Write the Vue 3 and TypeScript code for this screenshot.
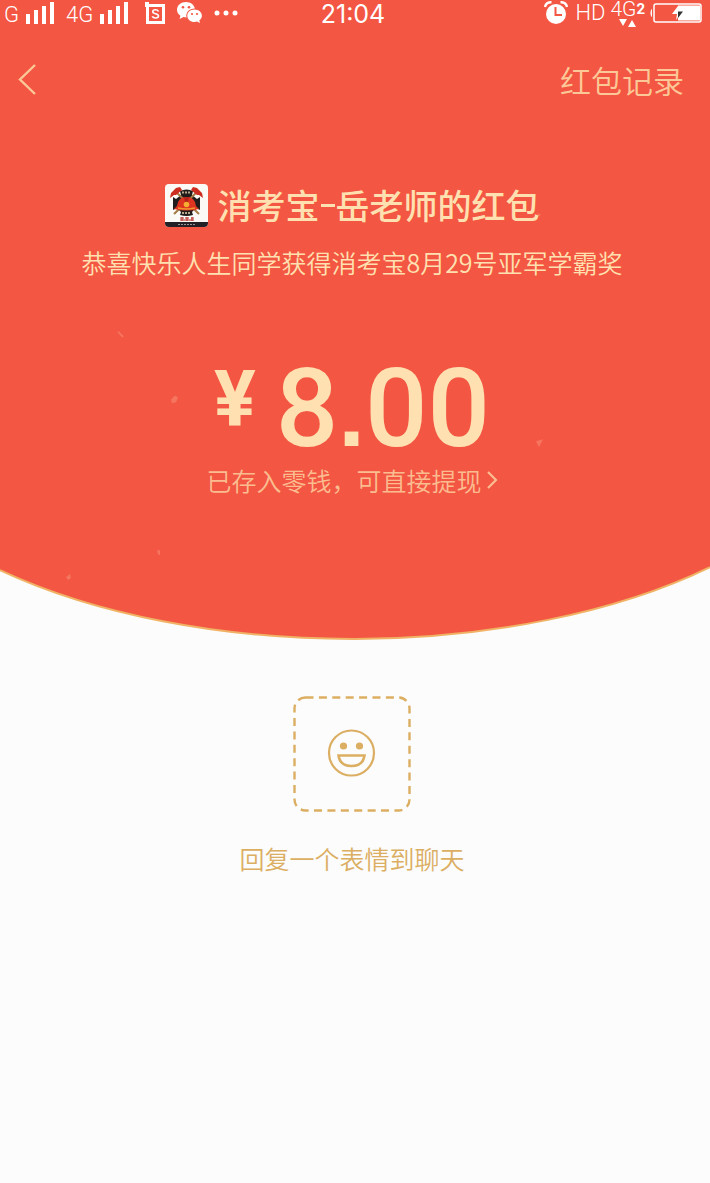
<script setup lang="ts">
import { computed, ref } from 'vue'

interface Bar { x: number; y: number }

const bars: Bar[] = [
  { x: 0, y: 12 },
  { x: 8, y: 8 },
  { x: 16, y: 4 },
  { x: 24, y: 0 },
]

const networks = ref<string[]>(['G', '4G'])
const sender = ref('消考宝')
const owner = ref('岳老师的红包')
const greeting = ref('恭喜快乐人生同学获得消考宝8月29号亚军学霸奖')
const amount = ref(8)
const amountParts = computed(() => amount.value.toFixed(2).split('.'))
</script>

<template>
  <div class="page">
    <section class="hero">
      <svg class="backdrop" viewBox="0 0 710 642" preserveAspectRatio="none" aria-hidden="true">
        <path d="M0 0H710V568A500 236 0 0 1 355 640A500 236 0 0 1 0 571Z" fill="#f35642" />
        <path d="M710 568A500 236 0 0 1 355 640A500 236 0 0 1 0 571" fill="none" stroke="#f0b264" stroke-width="2" />
        <g fill="#f8836c" opacity=".7">
          <path d="M117 332L119 332L124 337L122 338Z" />
          <path d="M171 400L175 396L178 398L176 403L172 404Z" />
          <path d="M536 442L543 440L539 448Z" />
          <path d="M157 551L160 551L160 556L158 555Z" />
          <path d="M66 578L70 575L71 579L68 581Z" />
          <path d="M537 213L541 215L539 217Z" />
        </g>
      </svg>

      <div class="status">
        <div class="side">
          <div v-for="n in networks" :key="n" class="network">
            <span>{{ n }}</span>
            <svg width="28" height="22" viewBox="0 0 28 22" aria-hidden="true">
              <rect v-for="b in bars" :key="b.x" :x="b.x" :y="b.y" width="4" :height="22 - b.y" fill="#fff" />
            </svg>
          </div>
          <svg class="badge" width="20" height="22" viewBox="0 0 20 22" aria-hidden="true">
            <path d="M0 0H4V2H20V22H1V5H0Z M4 5V19H17V5Z" fill="#fff" fill-rule="evenodd" />
            <path d="M13.5 9.5C12.5 7.2 7.8 7.2 7.8 9.7C7.8 12.3 13.5 11.4 13.5 14C13.5 16.6 8 16.5 7.3 14.3" fill="none" stroke="#fff" stroke-width="1.6" />
          </svg>
          <svg width="25" height="22" viewBox="0 0 25 22" aria-hidden="true">
            <path d="M9 0C4 0 0 3.4 0 7.7C0 10.2 1.3 12.3 3.4 13.7L2.6 17L6.5 15C7.5 15.3 8.4 15.4 9.5 15.4C8.3 10.5 12.5 6.5 17.9 6.6C17.1 2.8 13.5 0 9 0Z" fill="#fff" />
            <path d="M17.5 7.4C13.3 7.4 10.3 10.2 10.3 13.7C10.3 17.2 13.4 20 17.5 20C18.4 20 19.3 19.8 20.1 19.5L23 21L22.3 18.3C23.9 17.2 24.9 15.6 24.9 13.7C24.9 10.2 21.7 7.4 17.5 7.4Z" fill="#fff" />
            <g fill="#f35642">
              <circle cx="6" cy="5.3" r="1.3" /><circle cx="12" cy="5.3" r="1.3" />
              <circle cx="15" cy="12" r="1.1" /><circle cx="20" cy="12" r="1.1" />
            </g>
          </svg>
          <svg width="24" height="6" viewBox="0 0 24 6" aria-hidden="true">
            <g fill="#fff"><circle cx="3" cy="3" r="2.5" /><circle cx="12" cy="3" r="2.5" /><circle cx="21" cy="3" r="2.5" /></g>
          </svg>
        </div>
        <time class="clock">21:04</time>
        <div class="side end">
          <svg width="24" height="24" viewBox="0 0 24 24" aria-hidden="true">
            <circle cx="12" cy="13" r="10" fill="#fff" />
            <path d="M1 6C1.5 3 4 1 7.5 1.2M23 6C22.5 3 20 1 16.5 1.2" fill="none" stroke="#fff" stroke-width="2.4" />
            <path d="M11.5 6V14H18" fill="none" stroke="#f35642" stroke-width="2" />
          </svg>
          <span class="hd">HD</span>
          <div class="data">
            <div class="data-label"><span>4G</span><b>2</b></div>
            <svg width="18" height="8" viewBox="0 0 18 8" aria-hidden="true">
              <path d="M0 0H8L4 7ZM9 8L13 1L17 8Z" fill="#fff" />
            </svg>
          </div>
          <svg width="52" height="20" viewBox="0 0 52 20" aria-hidden="true">
            <path d="M2 6C0 7 0 13 2 14Z" fill="#fff" />
            <rect x="4" y="1" width="47" height="18" rx="2" fill="none" stroke="#fff" stroke-width="1.5" />
            <rect x="28" y="2.5" width="22" height="15" fill="#fff" />
            <path d="M28 3L22 11H27L26 17L28 14Z" fill="#fff" />
            <path d="M28 3V8.5H33L28 15Z" fill="#333" />
          </svg>
        </div>
      </div>

      <header class="nav">
        <button class="back" type="button" aria-label="返回">
          <svg width="18" height="32" viewBox="0 0 18 32" aria-hidden="true">
            <path d="M17 1L2 15.5L17 30" fill="none" stroke="#fcc897" stroke-width="2.4" />
          </svg>
        </button>
        <a class="records" href="#records">红包记录</a>
      </header>

      <div class="packet">
        <h1 class="sender">
          <svg width="43" height="43" viewBox="0 0 43 43" aria-hidden="true">
            <rect width="43" height="43" rx="4" fill="#fbfaf7" />
            <path d="M0 38H43V39Q43 43 39 43H4Q0 43 0 39Z" fill="#242126" />
            <path d="M13 40.5H31" stroke="#9a9698" stroke-dasharray="2 1" />
            <path d="M15 7Q21.5 4 28 7L27 11L32 15L35 13V26L31 24L27 28L28 31Q21.5 33 15 31L16 28L12 24L8 26V13L11 15L16 11Z" fill="#211d1c" />
            <path d="M10 7L34 30M33 7L9 30" stroke="#a47a45" stroke-width="2" />
            <path d="M17 8.5H26M17 29H26" stroke="#b8a88b" stroke-width="2" stroke-dasharray="2 1" />
            <path d="M5 14L6 9L11 4L15 3L17 6L11 11L9 11ZM38 14L37 9L32 4L28 3L26 6L32 11L34 11Z" fill="#cd2c20" />
            <path d="M12 22Q13 13 21.5 13Q30 13 31 22L34 25Q21.5 28 9 25Z" fill="#df3520" />
            <path d="M19 13H24L23 18H20Z" fill="#b52419" />
            <circle cx="21.5" cy="20.5" r="2.8" fill="#f5ad32" />
            <path d="M13 24Q21.5 26 30 24" fill="none" stroke="#f29730" stroke-width="1.5" />
            <path d="M15 34H19M17 33V37M20 34H24M22 33V37M26 34H29M27 33V37M15 36H29" stroke="#b42c25" />
          </svg>
          <span>{{ sender }}<i class="dash" />{{ owner }}</span>
        </h1>

        <p class="greeting">{{ greeting }}</p>

        <p class="amount">
          <span class="currency">¥</span>
          <span>{{ amountParts[0] }}<span class="point">.</span>{{ amountParts[1] }}</span>
        </p>

        <a class="balance" href="#balance">
          <span>已存入零钱，可直接提现</span>
          <svg width="12" height="20" viewBox="0 0 12 20" aria-hidden="true">
            <path d="M2 2L10 10L2 18" fill="none" stroke="#fbbd90" stroke-width="2.2" />
          </svg>
        </a>
      </div>
    </section>

    <main class="reply">
      <button class="emoji" type="button" aria-labelledby="reply-label">
        <svg width="118" height="116" viewBox="0 0 118 116" aria-hidden="true">
          <rect x="1.5" y="1.5" width="115" height="113" rx="11" fill="none" stroke="#dbae62" stroke-width="2.4" stroke-dasharray="8 5.4" />
          <g transform="translate(58.5 57)">
            <circle r="22.5" fill="none" stroke="#dbae62" stroke-width="2.2" />
            <circle cx="-8" cy="-7" r="3.6" fill="#dbae62" />
            <circle cx="8" cy="-7" r="3.6" fill="#dbae62" />
            <path d="M-13 2.5H13C12 9.5 7 13 0 13S-12 9.5 -13 2.5Z" fill="none" stroke="#dbae62" stroke-width="2.5" />
          </g>
        </svg>
      </button>
      <p id="reply-label">回复一个表情到聊天</p>
    </main>
  </div>
</template>

<style>
body { margin: 0; background: #fcfcfc; }
</style>

<style scoped>
.page {
  min-height: 100vh;
  background: #fcfcfc;
  font-family: "Noto Sans CJK SC", sans-serif;
  font-weight: 350;
}
.hero {
  position: relative;
  isolation: isolate;
  padding-bottom: 144px;
  color: #ffe1b1;
}
.backdrop { position: absolute; inset: 0; z-index: -1; width: 100%; height: 100%; }
svg { display: block; flex: none; }
p, h1 { margin: 0; font-weight: inherit; }
a { color: inherit; text-decoration: none; }
button { padding: 0; border: 0; background: none; cursor: pointer; }

.status {
  display: grid;
  grid-template-columns: 1fr auto 1fr;
  height: 28px;
  padding: 0 8px 0 4px;
  color: #fff;
  font-family: Roboto, "Liberation Sans", sans-serif;
  font-size: 22px;
  line-height: 24px;
}
.side { display: flex; align-items: center; height: 26px; gap: 12px; }
.end { justify-content: flex-end; gap: 5px; }
.network { display: flex; align-items: flex-end; gap: 7px; height: 22px; }
.network span { line-height: 18px; }
.badge { margin-left: 5px; }
.clock { font-family: Inter, sans-serif; font-size: 25px; line-height: 28px; font-weight: 400; }
.hd { margin-left: 2px; }
.data { display: flex; flex-direction: column; align-items: center; height: 26px; }
.data-label { display: flex; align-items: center; height: 19px; line-height: 19px; font-size: 21px; }
.data-label b { font-size: 15px; }

.nav {
  display: flex;
  align-items: center;
  justify-content: space-between;
  height: 103px;
  padding: 0 26px 0 18px;
  color: #fcc897;
}
.records { font-size: 31px; line-height: 44px; }
.packet {
  display: flex;
  flex-direction: column;
  align-items: center;
  padding: 48px 6px 0 0;
}
.sender {
  display: flex;
  align-items: center;
  gap: 10px;
  font-size: 34px;
  line-height: 52px;
  font-weight: 500;
}
.dash { display: inline-block; width: 14px; height: 3px; margin: 0 1px; background: currentColor; vertical-align: 12px; }
.greeting { margin-top: 11px; font-size: 25px; line-height: 40px; }
.amount {
  display: flex;
  align-items: flex-start;
  gap: 20px;
  margin-top: 73px;
  font-family: Roboto, sans-serif;
  font-size: 110px;
  line-height: 108px;
  font-weight: 500;
}
.currency { font-size: 78px; line-height: 90px; font-weight: 700; }
.point { font-family: "Liberation Sans", sans-serif; font-size: 96px; line-height: 1; font-weight: 700; }
.balance {
  display: flex;
  align-items: center;
  gap: 4px;
  font-size: 25px;
  line-height: 34px;
  color: #fbbd90;
}
.reply {
  display: flex;
  flex-direction: column;
  align-items: center;
  gap: 26px;
  padding: 55px 6px 0 0;
  color: #dbae62;
  font-size: 25px;
  line-height: 40px;
}
</style>
